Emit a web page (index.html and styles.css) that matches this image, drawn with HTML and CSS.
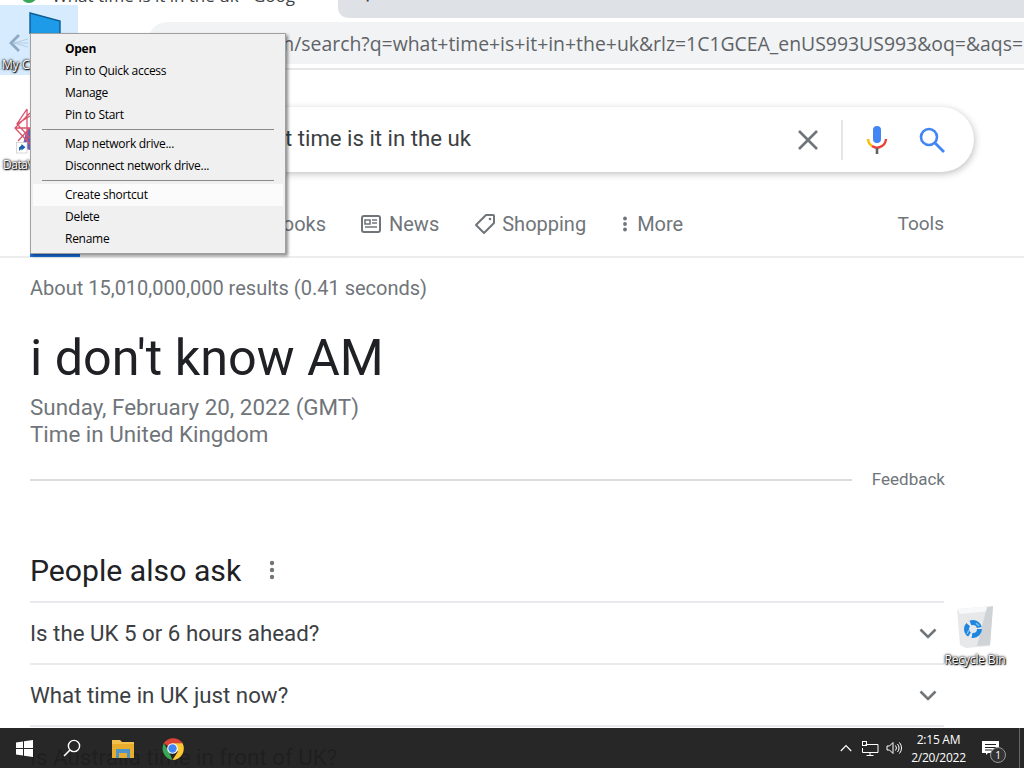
FILE: index.html
```html
<!DOCTYPE html>
<html lang="en">
<head>
    <meta charset="UTF-8">
    <title>What time is it in the uk - Google Search</title>
    <link rel="stylesheet" href="styles.css">
</head>
<body>
    <div class="browser">
        <div class="tabstrip">
            <div class="tab">
                <span class="favicon"></span>
                <span class="tab-title">What time is it in the uk - Goog</span>
            </div>
            <div class="tab-rest"><span class="new-tab">+</span></div>
        </div>

        <div class="toolbar">
            <svg class="back-arrow" width="20" height="20" viewBox="0 0 20 20">
                <path d="M6 10l14-4M6 10h14M6 10l14 4" stroke="#b9c3cc" stroke-width=".8"/>
                <path d="M11 2l-8 8 8 8" fill="none" stroke="#87939e" stroke-width="2.8"/>
            </svg>
            <div class="address">
                <span class="url">google.com/search?q=what+time+is+it+in+the+uk&amp;rlz=1C1GCEA_enUS993US993&amp;oq=&amp;aqs=</span>
            </div>
        </div>

        <div class="page">
            <div class="searchbox">
                <span class="query">what time is it in the uk</span>
                <svg class="clear-icon" width="24" height="24" viewBox="0 0 24 24"><path d="M3 3l18 18M21 3L3 21" stroke="#70757a" stroke-width="2.6"/></svg>
                <span class="search-sep"></span>
                <svg class="mic-icon" width="24" height="30" viewBox="0 0 24 30">
                    <rect x="8" y="1" width="8" height="17" rx="4" fill="#4285f4"/>
                    <path d="M3 14a9 9 0 0 0 4 7" fill="none" stroke="#fbbc05" stroke-width="2.4"/>
                    <path d="M7 21a9 9 0 0 0 10 0 9 9 0 0 0 4-7" fill="none" stroke="#ea4335" stroke-width="2.4"/>
                    <path d="M12 23v6" stroke="#5f6368" stroke-width="2.6"/>
                </svg>
                <svg class="lens-icon" width="28" height="28" viewBox="0 0 28 28"><circle cx="11" cy="11" r="8" fill="none" stroke="#4285f4" stroke-width="2.6"/><path d="M17 17l9 9" stroke="#4285f4" stroke-width="2.8"/></svg>
            </div>

            <div class="tabs">
                <div class="tabs-left">
                    <span class="tab-link tab-books">ooks</span>
                    <span class="tab-link tab-news">
                        <svg width="20" height="18" viewBox="0 0 20 18"><rect x="1" y="1" width="18" height="16" rx="2" fill="none" stroke="#70757a" stroke-width="2"/><path d="M4 5h5v4H4zM11 5h5M11 8h5M4 12h12" stroke="#70757a" stroke-width="1.6" fill="none"/></svg>
                        News
                    </span>
                    <span class="tab-link tab-shopping">
                        <svg width="22" height="22" viewBox="0 0 22 22"><path d="M12 2h7a1 1 0 0 1 1 1v7L10 20 2 12z" fill="none" stroke="#70757a" stroke-width="2" stroke-linejoin="round"/><circle cx="16" cy="6" r="1.3" fill="#70757a"/></svg>
                        Shopping
                    </span>
                    <span class="tab-link tab-more">
                        <svg width="6" height="16" viewBox="0 0 6 16"><circle cx="3" cy="2.5" r="1.9" fill="#70757a"/><circle cx="3" cy="8" r="1.9" fill="#70757a"/><circle cx="3" cy="13.5" r="1.9" fill="#70757a"/></svg>
                        More
                    </span>
                </div>
                <span class="tab-link tab-tools">Tools</span>
            </div>
            <span class="all-underline"></span>

            <div class="results">
                <p class="stats">About 15,010,000,000 results (0.41 seconds)</p>
                <h1 class="clock">i don't know AM</h1>
                <p class="clock-sub">Sunday, February 20, 2022 (GMT)</p>
                <p class="clock-sub">Time in United Kingdom</p>
                <div class="feedback-row">
                    <span class="feedback-line"></span>
                    <span class="feedback">Feedback</span>
                </div>

                <div class="paa-head">
                    <h2 class="paa-title">People also ask</h2>
                    <svg width="8" height="20" viewBox="0 0 8 20"><circle cx="4" cy="3" r="2.2" fill="#70757a"/><circle cx="4" cy="10" r="2.2" fill="#70757a"/><circle cx="4" cy="17" r="2.2" fill="#70757a"/></svg>
                </div>
                <div class="paa-row">
                    <span>Is the UK 5 or 6 hours ahead?</span>
                    <svg class="chev" width="18" height="11" viewBox="0 0 18 11"><path d="M1.5 1.5L9 9l7.5-7.5" fill="none" stroke="#70757a" stroke-width="2.6"/></svg>
                </div>
                <div class="paa-row">
                    <span>What time in UK just now?</span>
                    <svg class="chev" width="18" height="11" viewBox="0 0 18 11"><path d="M1.5 1.5L9 9l7.5-7.5" fill="none" stroke="#70757a" stroke-width="2.6"/></svg>
                </div>
                <div class="paa-row">
                    <span>Is Australia time in front of UK?</span>
                </div>
            </div>
        </div>
    </div>

    <!-- desktop icons sit on top of the browser -->
    <div class="desk-icon desk-selected">
        <svg class="drive-icon" width="32" height="22" viewBox="0 0 32 22"><path d="M1 1l30 8v13H1z" fill="#1e9be8" stroke="#0d5c94" stroke-width="1.4"/></svg>
        <span class="desk-label">My C</span>
    </div>
    <div class="desk-icon desk-data">
        <svg class="data-icon" width="16" height="46" viewBox="0 0 16 46">
            <path d="M12 24l4-4v22l-8-2z" fill="#6a62b8"/>
            <path d="M13 1L3 16l13 14M16 5L1 20l15 16M13 1v32M1 20h15M3 16l13-8M4 33l12-13" fill="none" stroke="#d9536b" stroke-width="1.3"/>
            <rect x="2.500" y="34.500" width="10.500" height="10.500" fill="#fff" stroke="#cfcfcf" stroke-width=".8"/>
            <path d="M5 43v-3.500l2.500-2.200V36l4 3.300-4 3.200v-1.600L6 42z" fill="#1b62b0"/>
        </svg>
        <span class="desk-label">DataV</span>
    </div>
    <div class="desk-icon desk-bin">
        <svg width="40" height="46" viewBox="0 0 40 46">
            <path d="M2 5l36-3-3 40-24 2-6-3z" fill="#e6e8ea"/>
            <path d="M2 5l36-3-2 5-31 3z" fill="#f7f8f9"/>
            <path d="M22 42l13-1 3-39-6 1z" fill="#cfd3d6"/>
            <circle cx="18" cy="25" r="6.500" fill="none" stroke="#1c86e0" stroke-width="5" stroke-dasharray="11 2.600"/>
            <path d="M24 22l-3-3M12 30l2-4" stroke="#7cc0f3" stroke-width="1.500"/>
        </svg>
        <span class="desk-label">Recycle Bin</span>
    </div>

    <div class="menu">
        <div class="menu-item menu-default">Open</div>
        <div class="menu-item">Pin to Quick access</div>
        <div class="menu-item">Manage</div>
        <div class="menu-item">Pin to Start</div>
        <div class="menu-sep"></div>
        <div class="menu-item">Map network drive...</div>
        <div class="menu-item">Disconnect network drive...</div>
        <div class="menu-sep"></div>
        <div class="menu-item menu-hover">Create shortcut</div>
        <div class="menu-item">Delete</div>
        <div class="menu-item">Rename</div>
    </div>

    <div class="taskbar">
        <div class="task-left">
            <svg class="task-start" width="17" height="17" viewBox="0 0 17 17"><path d="M0 2.4l7-1v6.6H0zM8 1.2L17 0v8H8zM0 9h7v6.6l-7-1zM8 9h9v8l-9-1.2z" fill="#fff"/></svg>
            <svg class="task-search" width="18" height="18" viewBox="0 0 18 18"><circle cx="11" cy="7" r="5.6" fill="none" stroke="#fff" stroke-width="1.4"/><path d="M7 11l-6 6" stroke="#fff" stroke-width="1.6"/></svg>
            <svg class="task-folder" width="22" height="20" viewBox="0 0 22 20">
                <path d="M0 2h8l2 2h12v16H0z" fill="#f3c14b"/>
                <path d="M0 6h22v14H0z" fill="#e8ad2d"/>
                <path d="M4 11h14v9h-3v-5H7v5H4z" fill="#4f94c4"/>
            </svg>
            <svg class="task-chrome" width="23" height="23" viewBox="0 0 24 24">
                <path d="M12 12L3 6.5A12 12 0 0 1 22.5 6.5H12z" fill="#db4437" stroke="#db4437" stroke-width=".5"/>
                <path d="M12 24A12 12 0 0 1 3 6.5l6 10.5z" fill="#3aa757"/>
                <path d="M12 24l5.5-8.5L12 6.5h10.5A12 12 0 0 1 12 24z" fill="#fcc934"/>
                <circle cx="12" cy="12" r="5.6" fill="#fff"/>
                <circle cx="12" cy="12" r="4.4" fill="#4285f4"/>
            </svg>
        </div>
        <div class="task-right">
            <svg width="12" height="8" viewBox="0 0 12 8"><path d="M.8 7L6 1.5 11.2 7" fill="none" stroke="#fff" stroke-width="1.2"/></svg>
            <svg class="tray-net" width="17" height="15" viewBox="0 0 17 15"><path d="M3.5 3.5H16v8H.5V7M8 11.5v3M4.5 14.5h7" fill="none" stroke="#fff"/><rect x=".5" y=".5" width="4" height="4" fill="none" stroke="#fff"/></svg>
            <svg class="tray-vol" width="17" height="14" viewBox="0 0 17 14"><path d="M1 5h2.5L7 1.5v11L3.500 9H1zM9.500 4.500a4 4 0 0 1 0 5M11.500 3a6 6 0 0 1 0 8M13.500 1.500a8.500 8.500 0 0 1 0 11" fill="none" stroke="#fff"/></svg>
            <div class="clock-tray">
                <span>2:15 AM</span>
                <span>2/20/2022</span>
            </div>
            <div class="notify">
                <svg width="17" height="14" viewBox="0 0 17 14"><path d="M0 0h17v12H6l-2 2v-2H0z" fill="#fff"/><path d="M3 3.500h11M3 6.500h11M3 9h7" stroke="#222" stroke-width="1"/></svg>
                <span class="notify-count">1</span>
            </div>
            <span class="show-desktop"></span>
        </div>
    </div>
</body>
</html>
```

FILE: styles.css
```css
*, *::before, *::after {
    box-sizing: border-box;
}

html, body {
    width: 100%;
    height: 100%;
    margin: 0;
}
body {
    position: relative;
    overflow: hidden;
    background: #fff;
    font-family: Roboto, Arial, sans-serif;
}
p, h1, h2 {
    margin: 0;
    font-weight: 400;
}

.browser {
    display: flex;
    flex-direction: column;
    height: 768px;
    overflow: hidden;
}

/* tab strip, mostly cut off by the top of the screen */
.tabstrip {
    flex: 0 0 18px;
    display: flex;
    overflow: hidden;
    background: #fff;
}
.tab {
    flex: 0 0 338px;
    display: flex;
    align-items: flex-start;
    padding-left: 21px;
    gap: 15px;
}
.favicon {
    width: 16px;
    height: 16px;
    margin-top: -13px;
    border-radius: 50%;
    background: #3aa757;
}
.tab-title {
    margin-top: -13px;
    font-family: "Open Sans", sans-serif;
    font-size: 17px;
    line-height: 18px;
    color: #3c4043;
    white-space: nowrap;
}
.tab-rest {
    flex: 1;
    padding-left: 24px;
    background: #dee1e6;
    border-bottom-left-radius: 10px;
}
.new-tab {
    display: block;
    margin-top: -14px;
    font-size: 20px;
    line-height: 20px;
    color: #3c4043;
}

.toolbar {
    flex: 0 0 52px;
    display: flex;
    align-items: center;
    padding-left: 8px;
    border-bottom: 2px solid #e6e7e9;
}
.back-arrow {
    flex: none;
}
.address {
    flex: 1;
    height: 42px;
    margin-left: 119px;
    margin-right: -20px;
    padding-right: 21px;
    display: flex;
    align-items: center;
    justify-content: flex-end;
    overflow: hidden;
    background: #f1f3f4;
    border-radius: 21px;
}
.url {
    font-family: "Open Sans", sans-serif;
    font-size: 19.4px;
    color: #5f6368;
    white-space: nowrap;
}

.page {
    position: relative;
    flex: 1;
}

.searchbox {
    width: 844px;
    height: 65px;
    margin: 37px 0 0 130px;
    display: flex;
    align-items: center;
    padding-left: 114px;
    border-radius: 33px;
    background: #fff;
    box-shadow: 1px 2px 7px rgba(32, 33, 36, .28);
}
.query {
    flex: 1;
    padding-bottom: 3px;
    font-size: 22.2px;
    color: #3c4043;
}
.clear-icon {
    margin-right: 21px;
}
.search-sep {
    width: 2px;
    height: 40px;
    background: #e3e5e7;
}
.mic-icon {
    margin-left: 22px;
}
.lens-icon {
    margin: 0 28px 0 29px;
}

.tabs {
    height: 84px;
    width: 944px;
    padding: 0 0 20px 30px;
    display: flex;
    align-items: flex-end;
    justify-content: space-between;
    line-height: 24px;
}
.tabs-left {
    display: flex;
}
.tab-link {
    display: inline-flex;
    align-items: center;
    font-size: 20px;
    color: #70757a;
}
.tab-books {
    width: 296px;
    justify-content: flex-end;
}
.tab-news {
    margin-left: 35px;
    gap: 8px;
}
.tab-shopping {
    margin-left: 35px;
    gap: 6px;
}
.tab-more {
    margin-left: 36px;
    gap: 9px;
}
.tab-tools {
    font-size: 19px;
}
.all-underline {
    position: absolute;
    left: 30px;
    top: 184px;
    width: 50px;
    height: 3px;
    background: #1a73e8;
}

.results {
    padding: 0 80px 0 30px;
    border-top: 2px solid #ecedee;
}
.stats {
    margin-top: 18px;
    font-size: 20px;
    line-height: 24px;
    color: #70757a;
}
.clock {
    margin-top: 23px;
    margin-bottom: 1px;
    font-size: 50.3px;
    line-height: 70px;
    color: #202124;
}
.clock-sub {
    font-size: 22.4px;
    line-height: 27px;
    color: #70757a;
}
.feedback-row {
    display: flex;
    align-items: center;
    gap: 20px;
    margin-top: 19px;
    margin-right: -1px;
    line-height: 24px;
}
.feedback-line {
    flex: 1;
    height: 2px;
    margin-top: 1px;
    background: #dadce0;
}
.feedback {
    font-size: 17px;
    color: #70757a;
}

.paa-head {
    display: flex;
    align-items: center;
    gap: 27px;
    height: 44px;
    margin-top: 57px;
    margin-bottom: 9px;
}
.paa-title {
    font-size: 30.2px;
    color: #202124;
}
.paa-row {
    display: flex;
    align-items: center;
    justify-content: space-between;
    height: 62px;
    padding-right: 7px;
    border-top: 2px solid #e8eaed;
    font-size: 22.3px;
    color: #3c4043;
}

/* windows desktop bits over the browser */
.desk-icon {
    position: absolute;
    display: flex;
    flex-direction: column;
    align-items: center;
}
.desk-selected {
    left: 0;
    top: 5px;
    width: 78px;
    height: 70px;
    padding-top: 7px;
    align-items: flex-start;
    background: rgba(153, 205, 250, .4);
}
.drive-icon {
    margin-left: 29px;
    margin-bottom: 23px;
}
.desk-selected .desk-label {
    margin-left: 2px;
}
.desk-data {
    left: 0;
    top: 108px;
    width: 30px;
    align-items: flex-start;
}
.data-icon {
    margin-left: 14px;
}
.desk-data .desk-label {
    margin: 3px 0 0 3px;
    letter-spacing: -.5px;
}
.desk-bin {
    left: 934px;
    top: 604px;
    width: 82px;
}
.desk-bin .desk-label {
    margin-top: 2px;
    letter-spacing: -.15px;
}
.desk-label {
    font-family: "Open Sans", sans-serif;
    font-size: 12px;
    line-height: 16px;
    color: #fff;
    white-space: nowrap;
    text-shadow: 0 0 2px #000, 1px 1px 1px #000, 0 0 3px #000;
}

.menu {
    position: absolute;
    left: 30px;
    top: 33px;
    width: 256px;
    height: 221px;
    padding: 4px 2px;
    background: #f0f0f0;
    border: 1px solid #a0a0a0;
    box-shadow: 2px 2px 3px rgba(0, 0, 0, .45);
    font-family: "Open Sans", sans-serif;
    font-size: 12px;
    letter-spacing: -.28px;
    color: #000;
}
.menu-item {
    height: 22px;
    padding-left: 32px;
    line-height: 22px;
    white-space: nowrap;
}
.menu-default {
    font-weight: 700;
}
.menu-hover {
    background: #fbfbfb;
}
.menu-sep {
    height: 1px;
    margin: 3px 9px;
    background: #8a8a8a;
}

.taskbar {
    position: absolute;
    left: 0;
    right: 0;
    bottom: 0;
    height: 40px;
    display: flex;
    align-items: center;
    justify-content: space-between;
    background: rgba(30, 30, 30, .96);
    color: #fff;
}
.task-left {
    display: flex;
    align-items: center;
}
.task-start {
    margin-left: 16px;
}
.task-search {
    margin-left: 30px;
}
.task-folder {
    margin-left: 31px;
}
.task-chrome {
    margin-left: 27px;
}
.task-right {
    display: flex;
    align-items: center;
    font-family: "Open Sans", sans-serif;
}
.tray-net {
    margin-left: 10px;
}
.tray-vol {
    margin-left: 7px;
}
.clock-tray {
    width: 71px;
    display: flex;
    flex-direction: column;
    align-items: center;
    padding-top: 2px;
    font-size: 12px;
    letter-spacing: -.25px;
    line-height: 18px;
}
.notify {
    position: relative;
    width: 45px;
    padding-left: 8px;
    display: flex;
    align-items: center;
}
.notify-count {
    position: absolute;
    left: 16px;
    top: 6px;
    width: 16px;
    height: 16px;
    border-radius: 50%;
    border: 1px solid #999;
    background: #333;
    font-size: 10px;
    line-height: 14px;
    text-align: center;
}
.show-desktop {
    width: 5px;
    height: 40px;
    border-left: 1px solid #666;
}
```
